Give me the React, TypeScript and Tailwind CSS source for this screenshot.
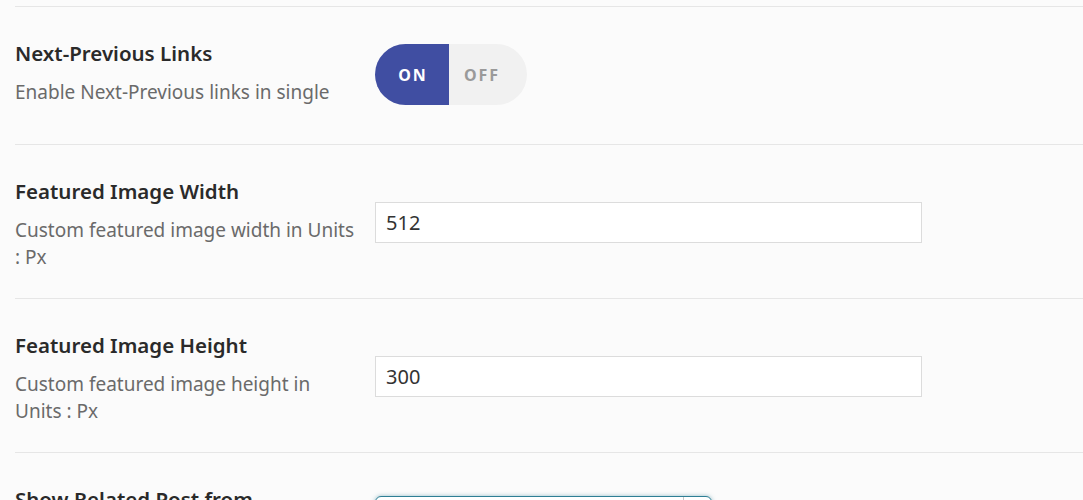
import { useState } from "react";

type Row = {
  title: string;
  desc: string;
  kind: "toggle" | "input" | "select";
  value?: string;
};

const ROWS: Row[] = [
  { title: "Next-Previous Links", desc: "Enable Next-Previous links in single", kind: "toggle" },
  { title: "Featured Image Width", desc: "Custom featured image width in Units : Px", kind: "input", value: "512" },
  { title: "Featured Image Height", desc: "Custom featured image height in Units : Px", kind: "input", value: "300" },
  { title: "Show Related Post from", desc: "", kind: "select" },
];

function Toggle() {
  const [on, setOn] = useState(true);
  return (
    <button
      onClick={() => setOn(!on)}
      className="mt-[5px] flex h-[61px] w-[152px] overflow-hidden rounded-full bg-[#f1f1f1] text-[16px] font-bold tracking-[0.12em]"
    >
      <span
        className={`flex h-full w-[74px] items-center justify-center pl-[2px] ${
          on ? "bg-[#404ea2] text-white" : "text-[#9a9a9a]"
        }`}
      >
        ON
      </span>
      <span
        className={`flex h-full flex-1 items-center justify-center pr-[12px] ${
          !on ? "bg-[#404ea2] text-white" : "text-[#9a9a9a]"
        }`}
      >
        OFF
      </span>
    </button>
  );
}

export default function App() {
  return (
    <div
      className="min-h-[500px] overflow-hidden bg-[#fbfbfb] pt-[6px] pl-[15px]"
      style={{ fontFamily: '"Noto Sans", "Open Sans", sans-serif' }}
    >
      {ROWS.map((row, i) => (
        <div
          key={row.title}
          className={`flex border-t border-[#e6e6e6] pt-[32px] ${i === 0 ? "pb-[38px]" : "pb-[27px]"}`}
        >
          <div className="w-[360px] shrink-0">
            <h3 className="text-[20.5px] leading-[28px] font-semibold text-[#2a2a2a]">{row.title}</h3>
            {row.desc && (
              <p className="mt-[12px] w-[344px] text-[19px] leading-[27px] text-[#6a6a6a]">{row.desc}</p>
            )}
          </div>
          {row.kind === "toggle" && <Toggle />}
          {row.kind === "input" && (
            <input
              defaultValue={row.value}
              className="mt-[25px] h-[41px] w-[547px] border border-[#dcdcdc] bg-white px-[10px] text-[20px] text-[#333] outline-none"
            />
          )}
          {row.kind === "select" && (
            <div className="mt-[11px] flex h-[40px] w-[337px] rounded-[6px] border border-[#2f7f95] bg-white shadow-[0_0_4px_rgba(47,127,149,0.5)]">
              <div className="flex-1" />
              <div className="w-[28px] border-l border-[#c8c8c8]" />
            </div>
          )}
        </div>
      ))}
    </div>
  );
}
